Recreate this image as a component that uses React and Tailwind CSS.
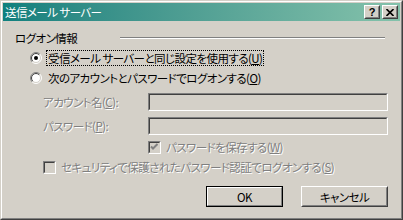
import React from "react";

const FONT = "font-['Noto_Sans_CJK_JP','Noto_Sans_CJK_SC',sans-serif] [font-feature-settings:'palt'] text-[11.5px] leading-[14px] tracking-[-0.55px]";
const DIS = "text-[#808080] [text-shadow:1px_1px_0_#ffffff]";

function Radio({ checked }) {
  return (
    <svg width="12" height="12" viewBox="0 0 12 12" className="shrink-0">
      <circle cx="6" cy="6" r="5" fill="#ffffff" />
      <path d="M2.111 9.889 A5.5 5.5 0 0 1 9.889 2.111" fill="none" stroke="#808080" strokeWidth="1" />
      <path d="M9.889 2.111 A5.5 5.5 0 0 1 2.111 9.889" fill="none" stroke="#ffffff" strokeWidth="1" />
      <path d="M2.818 9.182 A4.5 4.5 0 0 1 9.182 2.818" fill="none" stroke="#404040" strokeWidth="1" />
      <path d="M9.182 2.818 A4.5 4.5 0 0 1 2.818 9.182" fill="none" stroke="#d4d0c8" strokeWidth="1" />
      {checked && <circle cx="6" cy="6" r="2" fill="#000000" />}
    </svg>
  );
}

function Check({ checked }) {
  return (
    <div className="w-[13px] h-[13px] shrink-0 border border-t-[#808080] border-l-[#808080] border-b-white border-r-white">
      <div className="w-full h-full border border-t-[#404040] border-l-[#404040] border-b-[#d4d0c8] border-r-[#d4d0c8] bg-[#d4d0c8]">
        {checked && (
          <svg width="9" height="9" viewBox="0 0 9 9" className="block">
            <path d="M1 3.5 L3 5.5 L7.5 1" fill="none" stroke="#808080" strokeWidth="2" />
          </svg>
        )}
      </div>
    </div>
  );
}

function Field() {
  return (
    <div className="w-[240px] h-[18px] border border-t-[#808080] border-l-[#808080] border-b-white border-r-white">
      <div className="w-full h-full border border-t-[#404040] border-l-[#404040] border-b-[#d4d0c8] border-r-[#d4d0c8] bg-[#d4d0c8]" />
    </div>
  );
}

function CapButton({ children }) {
  return (
    <div className="w-[16px] h-[14px] border border-t-white border-l-white border-b-[#404040] border-r-[#404040]">
      <div className="w-full h-full border border-t-[#d4d0c8] border-l-[#d4d0c8] border-b-[#808080] border-r-[#808080] bg-[#d4d0c8] flex items-center justify-center">
        {children}
      </div>
    </div>
  );
}

function Button({ children, w, isDefault }) {
  const inner = (
    <div className="w-full h-full border border-t-white border-l-white border-b-[#404040] border-r-[#404040]">
      <div className="w-full h-full border border-t-[#d4d0c8] border-l-[#d4d0c8] border-b-[#808080] border-r-[#808080] bg-[#d4d0c8] flex items-center justify-center text-black">
        {children}
      </div>
    </div>
  );
  return (
    <div className={`${w} h-[21px] ${isDefault ? "border border-black" : ""}`}>
      {isDefault ? (
        <div className="w-full h-full border border-t-white border-l-white border-b-[#808080] border-r-[#808080]">
          <div className="w-full h-full bg-[#d4d0c8] flex items-center justify-center text-black">{children}</div>
        </div>
      ) : (
        inner
      )}
    </div>
  );
}

export default function App() {
  return (
    <div className={`w-[403px] h-[220px] bg-[#d4d0c8] ${FONT} text-black`}>
      <div className="w-full h-full border border-t-[#d4d0c8] border-l-[#d4d0c8] border-b-[#404040] border-r-[#404040]">
        <div className="w-full h-full border border-t-white border-l-white border-b-[#808080] border-r-[#808080] p-[1px] flex flex-col">
          {/* title bar */}
          <div className="h-[18px] shrink-0 flex items-center bg-gradient-to-r from-[#0e807e] to-[#84c2ab] pl-[2px] pr-[2px]">
            <span className="text-white">送信メール サーバー</span>
            <div className="ml-auto flex gap-[2px]">
              <CapButton>
                <span className="font-['Liberation_Sans',sans-serif] font-bold text-[11px] leading-[10px] tracking-normal text-black [font-feature-settings:normal]">?</span>
              </CapButton>
              <CapButton>
                <svg width="8" height="7" viewBox="0 0 8 7" className="block">
                  <path d="M0.5 0 L7.5 7 M7.5 0 L0.5 7" stroke="#000" strokeWidth="1.6" />
                </svg>
              </CapButton>
            </div>
          </div>

          {/* group header */}
          <div className="mt-[10px] h-[14px] flex items-center pl-[12px] pr-[15px]">
            <span className="w-[105px] shrink-0">ログオン情報</span>
            <div className="flex-1 h-[2px] border-t border-t-[#808080] border-b border-b-white" />
          </div>

          {/* radio 1 */}
          <div className="mt-[6px] h-[14px] flex items-center pl-[27px]">
            <Radio checked />
            <span className="ml-[4px] h-[16px] flex items-center px-[1px] border border-dotted border-black">
              受信メール サーバーと同じ設定を使用する(<u>U</u>)
            </span>
          </div>

          {/* radio 2 */}
          <div className="mt-[6px] h-[14px] flex items-center pl-[27px]">
            <Radio />
            <span className="ml-[4px] h-[16px] flex items-center px-[1px] border border-transparent">
              次のアカウントとパスワードでログオンする(<u>O</u>)
            </span>
          </div>

          {/* account */}
          <div className="mt-[8px] h-[18px] flex items-center pl-[40px]">
            <span className={`w-[105px] shrink-0 ${DIS}`}>
              アカウント名(<u>C</u>):
            </span>
            <Field />
          </div>

          {/* password */}
          <div className="mt-[6px] h-[18px] flex items-center pl-[40px]">
            <span className={`w-[105px] shrink-0 ${DIS}`}>
              パスワード(<u>P</u>):
            </span>
            <Field />
          </div>

          {/* save password */}
          <div className="mt-[5px] h-[14px] flex items-center pl-[145px]">
            <Check checked />
            <span className={`ml-[5px] ${DIS}`}>
              パスワードを保存する(<u>W</u>)
            </span>
          </div>

          {/* SPA */}
          <div className="mt-[6px] h-[14px] flex items-center pl-[40px]">
            <Check />
            <span className={`ml-[5px] ${DIS}`}>
              セキュリティで保護されたパスワード認証でログオンする(<u>S</u>)
            </span>
          </div>

          {/* buttons */}
          <div className="mt-[12px] flex pl-[203px]">
            <Button w="w-[77px]" isDefault>OK</Button>
            <div className="ml-[18px]">
              <Button w="w-[87px]">キャンセル</Button>
            </div>
          </div>
        </div>
      </div>
    </div>
  );
}
